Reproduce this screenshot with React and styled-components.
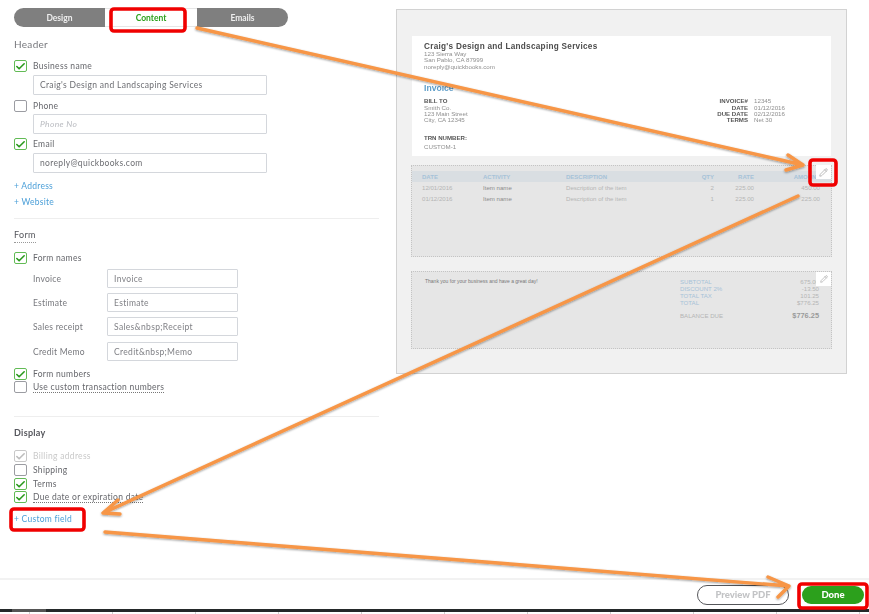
import React from 'react'
import styled, { createGlobalStyle } from 'styled-components';
import { Check, Pencil } from 'lucide-react';

const GlobalStyle = createGlobalStyle`
    html, body { margin: 0; padding: 0; background: #fff; }
    body { font-family: "Lato", "Liberation Sans", sans-serif; }
`;

const TABLE_ROWS = [
    { date: '12/01/2016', qty: 2, rate: '225.00', amount: '450.00' },
    { date: '01/12/2016', qty: 1, rate: '225.00', amount: '225.00' },
];
const TOTALS = [
    ['SUBTOTAL', '675.00'],
    ['DISCOUNT 2%', '-13.50'],
    ['TOTAL TAX', '101.25'],
    ['TOTAL', '$776.25'],
];
const FORM_NAMES = [
    ['Invoice', 'Invoice', 5],
    ['Estimate', 'Estimate', 5],
    ['Sales receipt', 'Sales&nbsp;Receipt', 5],
    ['Credit Memo', 'Credit&nbsp;Memo', 6],
];

function CheckItem({ label, state, top, dotted }) {
    return (
        <CheckRow $top={top}>
            <Box $state={state}>
                {state !== 'off' && <Check size={13} strokeWidth={3.5} />}
            </Box>
            <CheckLabel $state={state} $dotted={dotted}>{label}</CheckLabel>
        </CheckRow>
    );
}

function Annotations() {
    return (
        <Overlay viewBox="0 0 869 614">
            <defs>
                <filter id="arrowShadow" x="-5%" y="-5%" width="110%" height="115%">
                    <feDropShadow dx="0" dy="1" stdDeviation="0.8" floodColor="#000" floodOpacity="0.4" />
                </filter>
            </defs>
            <g fill="none" stroke="#f79646" strokeWidth="3.4" strokeLinecap="round" strokeLinejoin="round" filter="url(#arrowShadow)">
                <path d="M197 28 L803 165 M788 155 L803 165 L786 170" />
                <path d="M798 196 L103 513 M118 500 L103 513 L120 514" />
                <path d="M105 532 L789 586 M768 577 L789 586 L778 597" />
            </g>
            <g fill="none" stroke="#f00000" strokeWidth="3.6">
                <rect x="111" y="9" width="74" height="22" rx="3" />
                <rect x="810" y="160" width="26" height="25" rx="3" />
                <rect x="11" y="509" width="73" height="21" rx="3" />
                <rect x="799" y="584" width="68" height="24" rx="3" />
            </g>
        </Overlay>
    );
}

function App() {
    return (
        <Page>
            <GlobalStyle />
            <Main>
                <Settings>
                    <Tabs>
                        <Tab>Design</Tab>
                        <Tab $active>Content</Tab>
                        <Tab>Emails</Tab>
                    </Tabs>

                    <SectionTitle $top={10}>Header</SectionTitle>
                    <CheckItem label="Business name" state="on" top={9} />
                    <WideInput $top={3}>Craig's Design and Landscaping Services</WideInput>
                    <CheckItem label="Phone" state="off" top={5} />
                    <WideInput $top={2} $placeholder>Phone No</WideInput>
                    <CheckItem label="Email" state="on" top={4} />
                    <WideInput $top={3}>noreply@quickbooks.com</WideInput>
                    <AddLink $top={6}>+ Address</AddLink>
                    <AddLink $top={2}>+ Website</AddLink>

                    <Divider $top={9} />

                    <SectionTitle $top={9} $dotted>Form</SectionTitle>
                    <CheckItem label="Form names" state="on" top={9} />
                    {FORM_NAMES.map(([label, value, top]) => (
                        <NameRow key={label} $top={top}>
                            <NameLabel>{label}</NameLabel>
                            <NameInput>{value}</NameInput>
                        </NameRow>
                    ))}
                    <CheckItem label="Form numbers" state="on" top={7} />
                    <CheckItem label="Use custom transaction numbers" state="off" top={1} dotted />

                    <Divider $top={23} />

                    <SectionTitle $top={9} $dark>Display</SectionTitle>
                    <CheckItem label="Billing address" state="disabled" top={10} />
                    <CheckItem label="Shipping" state="off" top={2} />
                    <CheckItem label="Terms" state="on" top={2} />
                    <CheckItem label="Due date or expiration date" state="on" top={1} dotted />
                    <AddLink $top={9}>+ Custom field</AddLink>
                </Settings>

                <Preview>
                    <Sheet>
                        <CompanyName>Craig's Design and Landscaping Services</CompanyName>
                        <SmallText>123 Sierra Way</SmallText>
                        <SmallText>San Pablo, CA 87999</SmallText>
                        <SmallText>noreply@quickbooks.com</SmallText>
                        <InvoiceTitle>Invoice</InvoiceTitle>
                        <BillRow>
                            <div>
                                <BoldText>BILL TO</BoldText>
                                <SmallText>Smith Co.</SmallText>
                                <SmallText>123 Main Street</SmallText>
                                <SmallText>City, CA 12345</SmallText>
                            </div>
                            <Meta>
                                <BoldText>INVOICE#</BoldText><SmallText>12345</SmallText>
                                <BoldText>DATE</BoldText><SmallText>01/12/2016</SmallText>
                                <BoldText>DUE DATE</BoldText><SmallText>02/12/2016</SmallText>
                                <BoldText>TERMS</BoldText><SmallText>Net 30</SmallText>
                            </Meta>
                        </BillRow>
                        <TrnLabel>TRN NUMBER:</TrnLabel>
                        <CustomValue>CUSTOM-1</CustomValue>
                    </Sheet>

                    <TableZone>
                        <TableHead>
                            <span>DATE</span>
                            <span>ACTIVITY</span>
                            <span>DESCRIPTION</span>
                            <RightCell>QTY</RightCell>
                            <RightCell>RATE</RightCell>
                            <RightCell>AMOUNT</RightCell>
                        </TableHead>
                        {TABLE_ROWS.map((row) => (
                            <TableRow key={row.date}>
                                <span>{row.date}</span>
                                <ItemName>Item name</ItemName>
                                <span>Description of the item</span>
                                <RightCell>{row.qty}</RightCell>
                                <RightCell>{row.rate}</RightCell>
                                <RightCell>{row.amount}</RightCell>
                            </TableRow>
                        ))}
                        <EditButton $top={-1}><Pencil size={9} /></EditButton>
                    </TableZone>

                    <FooterZone>
                        <ThankYou>Thank you for your business and have a great day!</ThankYou>
                        <Totals>
                            {TOTALS.map(([label, value]) => (
                                <TotalRow key={label}>
                                    <TotalLabel>{label}</TotalLabel>
                                    <span>{value}</span>
                                </TotalRow>
                            ))}
                            <BalanceRow>
                                <span>BALANCE DUE</span>
                                <BalanceAmount>$776.25</BalanceAmount>
                            </BalanceRow>
                        </Totals>
                        <EditButton $top={0}><Pencil size={8} /></EditButton>
                    </FooterZone>
                </Preview>
            </Main>

            <Footer>
                <PreviewButton>Preview PDF</PreviewButton>
                <DoneButton>Done</DoneButton>
            </Footer>
            <DarkStrip />
            <Ticks />
            <Annotations />
        </Page>
    );
}

export default App;

const Page = styled.div`
    position: relative;
    width: 869px;
    height: 614px;
    overflow: hidden;
    background: #fff;
    color: #6b6c72;
`;
const Main = styled.div`
    display: flex;
    height: 578px;
    filter: blur(0.4px);
`;
const Settings = styled.div`
    width: 365px;
    padding: 8px 17px 0 14px;
    flex-shrink: 0;
`;
const Tabs = styled.div`
    display: flex;
    width: 274px;
    height: 19px;
`;
const Tab = styled.div`
    flex: ${(p) => (p.$active ? '0 0 92px' : '1')};
    display: flex;
    align-items: center;
    justify-content: center;
    font-size: 8.5px;
    font-weight: 700;
    background: ${(p) => (p.$active ? '#fff' : '#7f7f7f')};
    color: ${(p) => (p.$active ? '#2ca01c' : '#eee')};
    border-top: ${(p) => (p.$active ? '1px solid #e6e6e6' : '0')};
    border-bottom: ${(p) => (p.$active ? '1px solid #e6e6e6' : '0')};
    &:first-child { border-radius: 10px 0 0 10px; }
    &:last-child { border-radius: 0 10px 10px 0; }
`;
const SectionTitle = styled.div`
    width: fit-content;
    margin-top: ${(p) => p.$top}px;
    line-height: 14px;
    font-size: ${(p) => (p.$dotted || p.$dark ? '9px' : '10px')};
    font-weight: ${(p) => (p.$dark ? 700 : 400)};
    letter-spacing: 0.3px;
    color: ${(p) => (p.$dotted || p.$dark ? '#55565c' : '#77787d')};
    border-bottom: ${(p) => (p.$dotted ? '1px dotted #999' : '0')};
`;
const CheckRow = styled.div`
    display: flex;
    align-items: center;
    height: 12px;
    margin-top: ${(p) => p.$top}px;
`;
const Box = styled.div`
    box-sizing: border-box;
    width: 13px;
    height: 12px;
    margin-right: 6px;
    flex-shrink: 0;
    display: flex;
    align-items: center;
    justify-content: center;
    border-radius: 2px;
    background: #fff;
    border: 1px solid ${(p) => (p.$state === 'on' ? '#62bb55' : p.$state === 'disabled' ? '#c8c8c8' : '#9b9ca2')};
    color: ${(p) => (p.$state === 'on' ? '#2a9a1c' : '#bdbdbd')};
`;
const CheckLabel = styled.span`
    font-size: 8.5px;
    letter-spacing: 0.3px;
    white-space: nowrap;
    color: ${(p) => (p.$state === 'disabled' ? '#c9c9c9' : '#66676c')};
    border-bottom: ${(p) => (p.$dotted ? '1px dotted #777' : '0')};
`;
const InputBase = styled.div`
    box-sizing: border-box;
    display: flex;
    align-items: center;
    background: #fff;
    border: 1px solid #d4d7dc;
    border-radius: 1px;
    font-size: 8.5px;
    letter-spacing: 0.33px;
    white-space: nowrap;
`;
const WideInput = styled(InputBase)`
    width: 234px;
    height: 20px;
    margin: ${(p) => p.$top}px 0 0 19px;
    padding-left: 6px;
    color: ${(p) => (p.$placeholder ? '#b9bbc0' : '#6d6e73')};
    font-style: ${(p) => (p.$placeholder ? 'italic' : 'normal')};
`;
const AddLink = styled.div`
    margin-top: ${(p) => p.$top}px;
    line-height: 14px;
    font-size: 8.5px;
    letter-spacing: 0.25px;
    color: #4b9fd8;
`;
const Divider = styled.div`
    margin-top: ${(p) => p.$top}px;
    height: 1px;
    background: #eeeeee;
`;
const NameRow = styled.div`
    display: flex;
    align-items: center;
    margin: ${(p) => p.$top}px 0 0 19px;
`;
const NameLabel = styled.span`
    width: 74px;
    font-size: 8.5px;
    letter-spacing: 0.25px;
    color: #77787d;
`;
const NameInput = styled(InputBase)`
    width: 131px;
    height: 19px;
    padding-left: 6px;
    color: #808186;
`;
const Preview = styled.div`
    box-sizing: border-box;
    width: 451px;
    height: 365px;
    margin: 9px 0 0 0;
    padding: 26px 15px 0 15px;
    background: #f1f1f1;
    border: 1px solid #d2d2d2;
`;
const Sheet = styled.div`
    box-sizing: border-box;
    height: 120px;
    padding: 6px 12px 0 12px;
    background: #fff;
    color: #8f8f8f;
    font-family: "Liberation Sans", sans-serif;
`;
const CompanyName = styled.div`
    font-size: 8.2px;
    line-height: 9px;
    font-weight: 700;
    letter-spacing: 0.28px;
    color: #4c4c4c;
`;
const SmallText = styled.div`
    font-size: 6.2px;
    line-height: 6.4px;
    white-space: nowrap;
`;
const BoldText = styled.div`
    font-size: 6.1px;
    line-height: 6.4px;
    font-weight: 700;
    color: #555;
    white-space: nowrap;
`;
const InvoiceTitle = styled.div`
    margin-top: 13px;
    font-size: 8.6px;
    line-height: 10px;
    font-weight: 700;
    color: #5c9cc8;
`;
const BillRow = styled.div`
    display: flex;
    justify-content: space-between;
    margin-top: 5px;
`;
const Meta = styled.div`
    display: grid;
    grid-template-columns: 35px 65px;
    column-gap: 6px;
    justify-items: start;
    & > div:nth-child(odd) { justify-self: end; }
`;
const TrnLabel = styled(BoldText)`
    margin-top: 11px;
`;
const CustomValue = styled(SmallText)`
    margin-top: 3px;
`;
const DottedZone = styled.div`
    position: relative;
    box-sizing: border-box;
    margin: 0 -1px;
    background: #e6e6e6;
    border: 1px dotted #c4c4c4;
    color: #b5b5b5;
    font-family: "Liberation Sans", sans-serif;
`;
const TableZone = styled(DottedZone)`
    height: 92px;
    margin-top: 9px;
    padding-top: 5px;
`;
const tableColumns = '61px 83px 120px 28px 40px 66px';
const TableHead = styled.div`
    display: grid;
    grid-template-columns: ${tableColumns};
    align-items: center;
    height: 11px;
    padding: 0 9px 0 10px;
    background: #d9dee2;
    font-size: 6px;
    font-weight: 700;
    color: #a6c2d8;
`;
const TableRow = styled.div`
    display: grid;
    grid-template-columns: ${tableColumns};
    align-items: center;
    height: 11px;
    margin-top: 0;
    padding: 0 9px 0 10px;
    font-size: 6.1px;
`;
const RightCell = styled.span`
    text-align: right;
`;
const ItemName = styled.span`
    color: #8c8c8c;
`;
const EditButton = styled.div`
    position: absolute;
    top: ${(p) => p.$top}px;
    right: 0;
    width: 15px;
    height: 14px;
    display: flex;
    align-items: center;
    justify-content: center;
    background: #fff;
    color: #a8a8a8;
`;
const FooterZone = styled(DottedZone)`
    display: flex;
    justify-content: space-between;
    height: 78px;
    margin-top: 14px;
    padding: 6px 12px 0 13px;
`;
const ThankYou = styled.div`
    font-size: 5px;
    line-height: 6px;
    color: #777;
`;
const Totals = styled.div`
    width: 139px;
    font-size: 6.1px;
`;
const TotalRow = styled.div`
    display: flex;
    justify-content: space-between;
    line-height: 7px;
`;
const TotalLabel = styled.span`
    color: #a6c2d8;
`;
const BalanceRow = styled.div`
    display: flex;
    justify-content: space-between;
    align-items: center;
    margin-top: 5px;
`;
const BalanceAmount = styled.span`
    font-size: 7.4px;
    font-weight: 700;
    color: #9a9a9a;
`;
const Footer = styled.div`
    box-sizing: border-box;
    display: flex;
    justify-content: flex-end;
    align-items: center;
    gap: 13px;
    height: 31px;
    padding: 0 5px 0 0;
    border-top: 2px solid #f2f2f2;
    filter: blur(0.3px);
`;
const PreviewButton = styled.div`
    box-sizing: border-box;
    width: 92px;
    height: 20px;
    display: flex;
    align-items: center;
    justify-content: center;
    border: 1px solid #55565a;
    border-radius: 10px;
    font-size: 9.5px;
    font-weight: 900;
    color: #c2c3c5;
`;
const DoneButton = styled.div`
    width: 62px;
    height: 18px;
    display: flex;
    align-items: center;
    justify-content: center;
    border-radius: 9px;
    background: #2ca01c;
    font-size: 9.5px;
    font-weight: 900;
    color: #fff;
`;
const DarkStrip = styled.div`
    height: 3px;
    background: linear-gradient(90deg, #24292a 12px, #555 12px 46px, #24292a 46px);
`;
const Ticks = styled.div`
    height: 2px;
    background: repeating-linear-gradient(90deg, #cfcfcf 0 1px, transparent 1px 83px);
    background-position: 29px 0;
`;
const Overlay = styled.svg`
    position: absolute;
    inset: 0;
    width: 869px;
    height: 614px;
    pointer-events: none;
`;
